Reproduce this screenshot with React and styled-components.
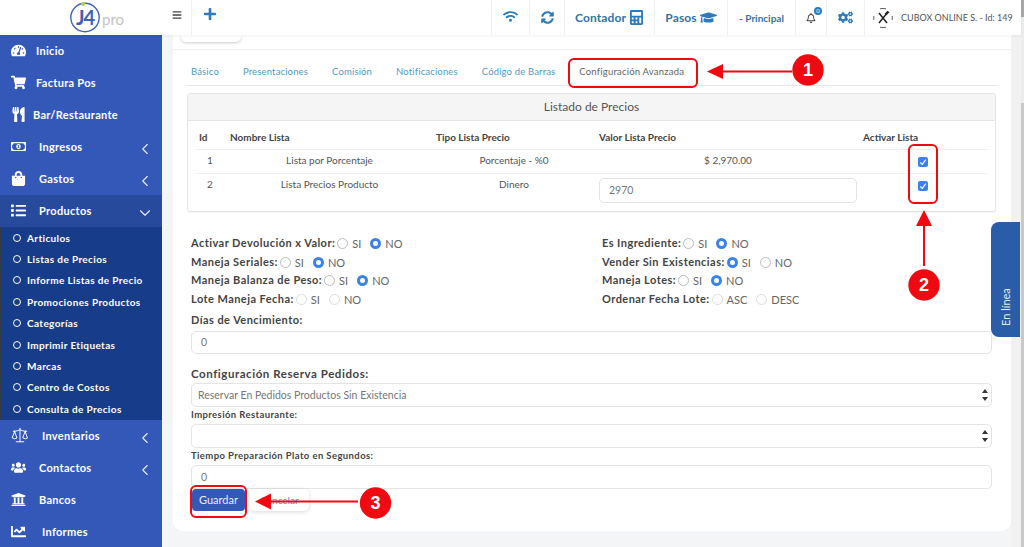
import React from "react";
import styled, { createGlobalStyle } from "styled-components";
import {
  FaBars,
  FaPlus,
  FaWifi,
  FaSyncAlt,
  FaCalculator,
  FaGraduationCap,
  FaRegBell,
  FaCogs,
  FaTachometerAlt,
  FaShoppingCart,
  FaUtensils,
  FaRegMoneyBillAlt,
  FaShoppingBag,
  FaList,
  FaUsers,
  FaUniversity,
  FaChartLine,
} from "react-icons/fa";
import { ChevronLeft, ChevronDown, Scale } from "lucide-react";

const FONT = `"Lato", "Open Sans", sans-serif`;

const GlobalStyle = createGlobalStyle`
  html, body { margin: 0; padding: 0; height: 547px; overflow: hidden; }
  * { box-sizing: border-box; }
  body { font-family: ${FONT}; color: #555; background: #f4f5f7; }
`;

const menuTop = [
  { icon: FaTachometerAlt, label: "Inicio", gap: 36 },
  { icon: FaShoppingCart, label: "Factura Pos", gap: 36 },
  { icon: FaUtensils, label: "Bar/Restaurante", gap: 33 },
  { icon: FaRegMoneyBillAlt, label: "Ingresos", gap: 39, arrow: "left" },
  { icon: FaShoppingBag, label: "Gastos", gap: 39, arrow: "left" },
];

const subItems = [
  "Articulos",
  "Listas de Precios",
  "Informe Listas de Precio",
  "Promociones Productos",
  "Categorías",
  "Imprimir Etiquetas",
  "Marcas",
  "Centro de Costos",
  "Consulta de Precios",
];

const ScaleIcon = () => <Scale size={18} strokeWidth={1.3} />;

const menuBottom = [
  { icon: ScaleIcon, label: "Inventarios", gap: 42, arrow: "left" },
  { icon: FaUsers, label: "Contactos", gap: 39, arrow: "left" },
  { icon: FaUniversity, label: "Bancos", gap: 39 },
  { icon: FaChartLine, label: "Informes", gap: 42 },
];

const radioRowsLeft = [
  { label: "Activar Devolución x Valor:", a: "SI", b: "NO", on: "b" },
  { label: "Maneja Seriales:", a: "SI", b: "NO", on: "b" },
  { label: "Maneja Balanza de Peso:", a: "SI", b: "NO", on: "b" },
  { label: "Lote Maneja Fecha:", a: "SI", b: "NO", faded: true },
];

const radioRowsRight = [
  { label: "Es Ingrediente:", a: "SI", b: "NO", on: "b" },
  { label: "Vender Sin Existencias:", a: "SI", b: "NO", on: "a" },
  { label: "Maneja Lotes:", a: "SI", b: "NO", on: "b" },
  { label: "Ordenar Fecha Lote:", a: "ASC", b: "DESC", faded: true },
];

function MenuRow({ item, active }) {
  const Icon = item.icon;
  return (
    <MenuItem $active={active}>
      <IconSlot $gap={item.gap}>
        <Icon />
      </IconSlot>
      <MenuLabel>{item.label}</MenuLabel>
      {item.arrow === "left" && (
        <MenuArrow>
          <ChevronLeft size={18} strokeWidth={1.5} />
        </MenuArrow>
      )}
      {item.arrow === "down" && (
        <MenuArrow>
          <ChevronDown size={18} strokeWidth={1.5} />
        </MenuArrow>
      )}
    </MenuItem>
  );
}

function Logo() {
  return (
    <LogoBox>
      <svg width="31" height="33" viewBox="0 0 31 33">
        <circle cx="15" cy="16.5" r="14.2" fill="none" stroke="#3f63b5" strokeWidth="1.4" />
        <circle cx="13" cy="3" r="2.1" fill="#b6d23a" />
        <LogoText x="15" y="24" textAnchor="middle">J4</LogoText>
      </svg>
      <LogoPro>pro</LogoPro>
    </LogoBox>
  );
}

function RadioRow({ row }) {
  return (
    <RadioLine>
      <RadioLabel>{row.label}</RadioLabel>
      <Radio $on={row.on === "a"} $faded={row.faded} />
      <RadioText>{row.a}</RadioText>
      <Radio $on={row.on === "b"} $faded={row.faded} $second />
      <RadioText>{row.b}</RadioText>
    </RadioLine>
  );
}

function Check() {
  return (
    <CheckBox>
      <svg width="8" height="8" viewBox="0 0 10 10">
        <path d="M1.5 5.5 L4 8 L8.5 2" fill="none" stroke="#fff" strokeWidth="1.3" />
      </svg>
    </CheckBox>
  );
}

export default function App() {
  return (
    <Page>
      <GlobalStyle />
      <Column>
        <TopBar>
          <Logo />
          <TopCell $w={29} $up={5}>
            <FaBars size={10} color="#444" />
          </TopCell>
          <PlusCell $w={300} $up={7} $line>
            <FaPlus size={14} color="#2f7ab8" />
          </PlusCell>
          <TopCell $w={38} $line $up={3}>
            <FaWifi size={15} color="#2f7ab8" />
          </TopCell>
          <TopCell $w={35} $line $up={1}>
            <FaSyncAlt size={13} color="#2f7ab8" />
          </TopCell>
          <TopCell $w={90} $line>
            <TopLink>Contador</TopLink>
            <FaCalculator size={15} color="#2f7ab8" />
          </TopCell>
          <TopCell $w={73} $line>
            <TopLink>Pasos</TopLink>
            <FaGraduationCap size={17} color="#2f7ab8" />
          </TopCell>
          <TopCell $w={68} $line>
            <SmallLink>- Principal</SmallLink>
          </TopCell>
          <TopCell $w={31} $line>
            <BellWrap>
              <FaRegBell size={10} color="#444" />
              <BellBadge>0</BellBadge>
            </BellWrap>
          </TopCell>
          <TopCell $w={38} $line>
            <FaCogs size={15} color="#2f7ab8" />
          </TopCell>
          <UserCell>
            <svg width="20" height="20" viewBox="0 0 20 20">
              <path
                d="M7 0.8 Q10 0 13 0.8 M7 19.2 Q10 20 13 19.2 M0.8 8 V12 M19.2 8 V12"
                fill="none"
                stroke="#333"
                strokeWidth="0.8"
              />
              <path d="M6 5 L14 15 M14.5 4.5 L6 15" stroke="#222" strokeWidth="1.5" />
              <path d="M12.5 6.5 L15.5 3.5" stroke="#222" strokeWidth="2.4" />
            </svg>
            <UserName>CUBOX ONLINE S. - Id: 149</UserName>
          </UserCell>
        </TopBar>

        <Body>
          <Sidebar>
            {menuTop.map((item) => (
              <MenuRow key={item.label} item={item} />
            ))}
            <MenuRow active item={{ icon: FaList, label: "Productos", gap: 39, arrow: "down" }} />
            <SubMenu>
              {subItems.map((label) => (
                <SubItem key={label}>
                  <SubDot />
                  {label}
                </SubItem>
              ))}
            </SubMenu>
            {menuBottom.map((item) => (
              <MenuRow key={item.label} item={item} />
            ))}
          </Sidebar>

          <Main>
            <Card>
              <PeekRow>
                <PeekButton />
              </PeekRow>
              <Tabs>
                <Tab>Básico</Tab>
                <Tab>Presentaciones</Tab>
                <Tab>Comisión</Tab>
                <Tab>Notificaciones</Tab>
                <Tab>Código de Barras</Tab>
                <Tab $active>Configuración Avanzada</Tab>
              </Tabs>

              <Panel>
                <PanelHeader>Listado de Precios</PanelHeader>
                <PriceTable>
                  <thead>
                    <tr>
                      <Th $w={30} $pad={4}>Id</Th>
                      <Th $w={205} $pad={5}>Nombre Lista</Th>
                      <Th $w={163} $pad={6}>Tipo Lista Precio</Th>
                      <Th $w={264} $pad={6}>Valor Lista Precio</Th>
                      <Th $pad={6}>Activar Lista</Th>
                    </tr>
                  </thead>
                  <tbody>
                    <tr>
                      <Td>1</Td>
                      <Td $pad={4}>Lista por Porcentaje</Td>
                      <Td $pad={5}>Porcentaje - %0</Td>
                      <Td $pad={6}>$ 2,970.00</Td>
                      <CheckTd><Check /></CheckTd>
                    </tr>
                    <tr>
                      <Td>2</Td>
                      <Td $pad={4}>Lista Precios Producto</Td>
                      <Td $pad={5}>Dinero</Td>
                      <InputTd><Field $h={25}>2970</Field></InputTd>
                      <CheckTd><Check /></CheckTd>
                    </tr>
                  </tbody>
                </PriceTable>
              </Panel>

              <RadioColumns>
                <div>
                  {radioRowsLeft.map((r) => (
                    <RadioRow key={r.label} row={r} />
                  ))}
                </div>
                <div>
                  {radioRowsRight.map((r) => (
                    <RadioRow key={r.label} row={r} />
                  ))}
                </div>
              </RadioColumns>

              <FormArea>
                <RadioLabel>Días de Vencimiento:</RadioLabel>
                <Field $h={23} $mt={5}>0</Field>
                <SectionLabel>Configuración Reserva Pedidos:</SectionLabel>
                <SelectField $h={24} $mt={3}>Reservar En Pedidos Productos Sin Existencia</SelectField>
                <TinyLabel>Impresión Restaurante:</TinyLabel>
                <SelectField $h={24} />
                <TinyLabel>Tiempo Preparación Plato en Segundos:</TinyLabel>
                <Field $h={24}>0</Field>
                <Buttons>
                  <SaveButton>Guardar</SaveButton>
                  <CancelButton>Cancelar</CancelButton>
                </Buttons>
              </FormArea>
            </Card>
            <Gutter />
            <OnlineTab>En línea</OnlineTab>
          </Main>
        </Body>
      </Column>

      <PageScroll>
        <ScrollTop />
        <ScrollRest />
      </PageScroll>

      <Mark $x={568} $y={58} $w={130} $h={30} />
      <Mark $x={908} $y={144} $w={30} $h={60} />
      <Mark $x={190} $y={485} $w={57} $h={33} />

      <Annotations width="1024" height="547" viewBox="0 0 1024 547">
        <g fill="#ee0a10">
          <rect x="722" y="70.5" width="70" height="2" />
          <path d="M707 71.5 L723 64 V79 Z" />
          <rect x="923" y="224" width="2" height="42" />
          <path d="M924 210 L916 226 H932 Z" />
          <rect x="270" y="500.5" width="88" height="2" />
          <path d="M255 501.5 L271 493.5 V509.5 Z" />
          <circle cx="808" cy="70" r="15.7" />
          <circle cx="924" cy="285" r="15.7" />
          <circle cx="375.5" cy="503" r="15.7" />
        </g>
      </Annotations>
      <Badge $x={808} $y={70}>1</Badge>
      <Badge $x={924} $y={285}>2</Badge>
      <Badge $x={375.5} $y={503}>3</Badge>
    </Page>
  );
}

const Page = styled.div`
  position: relative;
  width: 1024px;
  height: 547px;
  overflow: hidden;
  display: flex;
`;

const Column = styled.div`
  flex: 1;
  min-width: 0;
  display: flex;
  flex-direction: column;
`;

const PageScroll = styled.div`
  width: 3px;
  flex: none;
  display: flex;
  flex-direction: column;
  background: #ececec;
`;

const ScrollTop = styled.div`
  height: 17px;
  background: #a8a8a8;
`;

const ScrollRest = styled.div`
  flex: 1;
  margin-top: 86px;
  background: #c9c9c9;
`;

const TopBar = styled.header`
  height: 35px;
  flex: none;
  display: flex;
  background: #fff;
  box-shadow: 0 1px 3px rgba(0, 0, 0, 0.06);
  z-index: 2;
`;

const LogoBox = styled.div`
  width: 162px;
  flex: none;
  display: flex;
  align-items: center;
  padding-left: 70px;
`;

const LogoText = styled.text`
  font-family: ${FONT};
  font-size: 20px;
  font-weight: 700;
  letter-spacing: -1px;
  fill: #3f63b5;
`;

const LogoPro = styled.span`
  font-size: 15px;
  color: #c4c4c4;
  margin: 2px 0 0 1px;
`;

const TopCell = styled.div`
  width: ${(p) => p.$w}px;
  flex: none;
  display: flex;
  align-items: center;
  justify-content: center;
  gap: 3px;
  padding-bottom: ${(p) => p.$up || 0}px;
  border-left: ${(p) => (p.$line ? "1px solid #eef0f2" : "none")};
`;

const PlusCell = styled(TopCell)`
  justify-content: flex-start;
  padding-left: 11px;
`;

const TopLink = styled.span`
  font-size: 12px;
  font-weight: 700;
  letter-spacing: 0.1px;
  color: #2f74ab;
`;

const SmallLink = styled.span`
  font-size: 10px;
  font-weight: 700;
  color: #2f74ab;
`;

const BellWrap = styled.div`
  position: relative;
  display: flex;
`;

const BellBadge = styled.span`
  position: absolute;
  top: -6px;
  right: -6px;
  width: 8px;
  height: 8px;
  border-radius: 50%;
  background: #2f7ab8;
  color: #fff;
  font-size: 6px;
  line-height: 8px;
  text-align: center;
`;

const UserCell = styled.div`
  flex: 1;
  display: flex;
  align-items: center;
  gap: 8px;
  padding-left: 8px;
  border-left: 1px solid #eef0f2;
`;

const UserName = styled.span`
  font-size: 9px;
  color: #555;
  white-space: nowrap;
`;

const Body = styled.div`
  flex: 1;
  display: flex;
  min-height: 0;
`;

const Sidebar = styled.nav`
  width: 162px;
  flex: none;
  background: #3358b7;
  overflow: hidden;
`;

const MenuItem = styled.div`
  height: 32px;
  display: flex;
  align-items: center;
  position: relative;
  padding: 0 0 2px 11px;
  color: #fff;
  background: ${(p) => (p.$active ? "#274a9c" : "transparent")};
`;

const IconSlot = styled.span`
  width: ${(p) => p.$gap - 11}px;
  display: flex;
  align-items: center;
  font-size: 15px;
`;

const MenuLabel = styled.span`
  font-size: 11px;
  font-weight: 700;
  letter-spacing: 0.3px;
`;

const MenuArrow = styled.span`
  position: absolute;
  right: 8px;
  top: 9px;
  display: flex;
  color: #e6ecfa;
`;

const SubMenu = styled.div`
  height: 193px;
  background: #173c8a;
  border-left: 2px solid #333b47;
`;

const SubItem = styled.div`
  height: 21.4px;
  display: flex;
  align-items: center;
  gap: 6px;
  padding-left: 11px;
  color: #fff;
  font-size: 10px;
  font-weight: 700;
  letter-spacing: 0.37px;
  white-space: nowrap;
`;

const SubDot = styled.span`
  width: 8px;
  height: 8px;
  flex: none;
  border: 1.2px solid #fff;
  border-radius: 50%;
`;

const Main = styled.main`
  flex: 1;
  position: relative;
  display: flex;
  padding-left: 11px;
  min-width: 0;
`;

const Card = styled.section`
  width: 838px;
  height: 496px;
  background: #fff;
  border-radius: 0 0 10px 10px;
  padding: 0 14px;
  display: flex;
  flex-direction: column;
`;

const PeekRow = styled.div`
  height: 15px;
  flex: none;
  margin: 0 -14px;
  border-bottom: 1px solid #f1f1f1;
  padding-left: 8px;
`;

const PeekButton = styled.div`
  width: 60px;
  height: 7px;
  background: #fff;
  border-radius: 0 0 5px 5px;
  box-shadow: 0 1px 3px rgba(0, 0, 0, 0.2);
`;

const Tabs = styled.div`
  height: 36px;
  flex: none;
  display: flex;
  align-items: center;
  gap: 24px;
  padding: 7px 0 0 5px;
  margin: 0 0 7px -1px;
  width: 812px;
  border-bottom: 1px solid #e6e6e6;
`;

const Tab = styled.span`
  font-size: 9.5px;
  letter-spacing: ${(p) => (p.$active ? "0.2px" : "0.15px")};
  color: ${(p) => (p.$active ? "#666" : "#4f9cc9")};
  white-space: nowrap;
`;

const Panel = styled.div`
  width: 809px;
  height: 119px;
  flex: none;
  border: 1px solid #e4e4e4;
  border-radius: 3px;
  box-shadow: 0 1px 1px rgba(0, 0, 0, 0.05);
`;

const PanelHeader = styled.div`
  height: 27px;
  background: #f5f5f5;
  border-bottom: 1px solid #e4e4e4;
  text-align: center;
  font-size: 12px;
  line-height: 26px;
  color: #555;
`;

const PriceTable = styled.table`
  width: 793px;
  margin: 5px 0 0 7px;
  border-collapse: collapse;
  table-layout: fixed;
  font-size: 10px;
`;

const Th = styled.th`
  width: ${(p) => (p.$w ? `${p.$w}px` : "auto")};
  height: 23px;
  text-align: left;
  font-weight: 700;
  color: #444;
  padding: 0 0 0 ${(p) => p.$pad}px;
  border-bottom: 1px solid #eee;
`;

const Td = styled.td`
  height: 24px;
  text-align: center;
  color: #555;
  vertical-align: top;
  padding: 4px 0 0 ${(p) => p.$pad || 0}px;
  border-bottom: 1px solid #f1f1f1;
  tr:last-child & {
    border-bottom: none;
  }
`;

const InputTd = styled(Td)`
  padding: 4px 0 0 6px;
`;

const CheckTd = styled(Td)`
  padding: 6px 0 0 61px;
  text-align: left;
`;

const CheckBox = styled.span`
  display: inline-flex;
  align-items: center;
  justify-content: center;
  width: 10px;
  height: 10px;
  background: #3b82e6;
  border-radius: 2px;
`;

const Field = styled.div`
  height: ${(p) => p.$h}px;
  margin-top: ${(p) => p.$mt || 0}px;
  border: 1px solid #e4e4e4;
  border-radius: 5px;
  padding-left: 9px;
  font-size: 10.5px;
  line-height: ${(p) => p.$h - 2}px;
  color: #777;
  background: #fff;
  text-align: left;
`;

const RadioColumns = styled.div`
  display: grid;
  grid-template-columns: 411px 1fr;
  margin: 21px 0 0 4px;
`;

const RadioLine = styled.div`
  height: 18.7px;
  display: flex;
  align-items: center;
`;

const RadioLabel = styled.span`
  font-size: 11px;
  font-weight: 700;
  letter-spacing: 0.45px;
  color: #444;
  white-space: nowrap;
`;

const Radio = styled.span`
  width: 11px;
  height: 11px;
  flex: none;
  margin: 2px 4px 0 ${(p) => (p.$second ? "9px" : "2px")};
  border-radius: 50%;
  border: ${(p) => (p.$on ? "3.5px solid #3b82e6" : `1px solid ${p.$faded ? "#ddd" : "#bbb"}`)};
  background: #fff;
`;

const RadioText = styled.span`
  font-size: 11px;
  color: #666;
  margin-top: 2px;
`;

const FormArea = styled.div`
  width: 801px;
  margin-left: 4px;
  padding-top: 5px;
  display: flex;
  flex-direction: column;
`;

const SectionLabel = styled(RadioLabel)`
  margin-top: 13px;
  font-size: 11.5px;
  letter-spacing: 0.55px;
`;

const TinyLabel = styled(RadioLabel)`
  font-size: 9.5px;
  letter-spacing: 0.4px;
  margin: 1px 0 2px;
  line-height: 14px;
`;

const SelectField = styled(Field)`
  position: relative;
  padding-left: 6px;
  &::before,
  &::after {
    content: "";
    position: absolute;
    right: 3px;
    width: 0;
    height: 0;
    border-left: 3px solid transparent;
    border-right: 3px solid transparent;
  }
  &::after {
    top: 5px;
    border-bottom: 4px solid #333;
  }
  &::before {
    bottom: 5px;
    border-top: 4px solid #333;
  }
`;

const Buttons = styled.div`
  display: flex;
  gap: 5px;
  margin-left: 1px;
`;

const SaveButton = styled.button`
  width: 53px;
  height: 22px;
  border: none;
  border-radius: 4px;
  background: #3358b7;
  color: #e9eefb;
  font-family: ${FONT};
  font-size: 11px;
  padding: 0;
`;

const CancelButton = styled.button`
  width: 59px;
  height: 22px;
  border: none;
  border-radius: 5px;
  background: #fff;
  color: #4f86e0;
  font-family: ${FONT};
  font-size: 10px;
  padding: 0;
  box-shadow: 0 1px 4px rgba(0, 0, 0, 0.15);
`;

const Gutter = styled.div`
  width: 10px;
  margin-left: auto;
  background: #f1f1f1;
`;

const OnlineTab = styled.div`
  position: absolute;
  right: 1px;
  top: 187px;
  width: 29px;
  height: 115px;
  background: #2a5ca8;
  color: #e6eef9;
  font-size: 11px;
  writing-mode: vertical-rl;
  transform: rotate(180deg);
  border-radius: 0 8px 8px 0;
  padding-top: 11px;
  line-height: 29px;
`;

const Mark = styled.div`
  position: absolute;
  left: ${(p) => p.$x}px;
  top: ${(p) => p.$y}px;
  width: ${(p) => p.$w}px;
  height: ${(p) => p.$h}px;
  border: 2.5px solid #ee0a10;
  border-radius: 6px;
`;

const Annotations = styled.svg`
  position: absolute;
  left: 0;
  top: 0;
  pointer-events: none;
`;

const Badge = styled.span`
  position: absolute;
  left: ${(p) => p.$x - 15}px;
  top: ${(p) => p.$y - 15}px;
  width: 30px;
  height: 30px;
  text-align: center;
  font-family: "Liberation Sans", sans-serif;
  font-size: 18px;
  font-weight: 700;
  line-height: 30px;
  color: #fff;
`;
